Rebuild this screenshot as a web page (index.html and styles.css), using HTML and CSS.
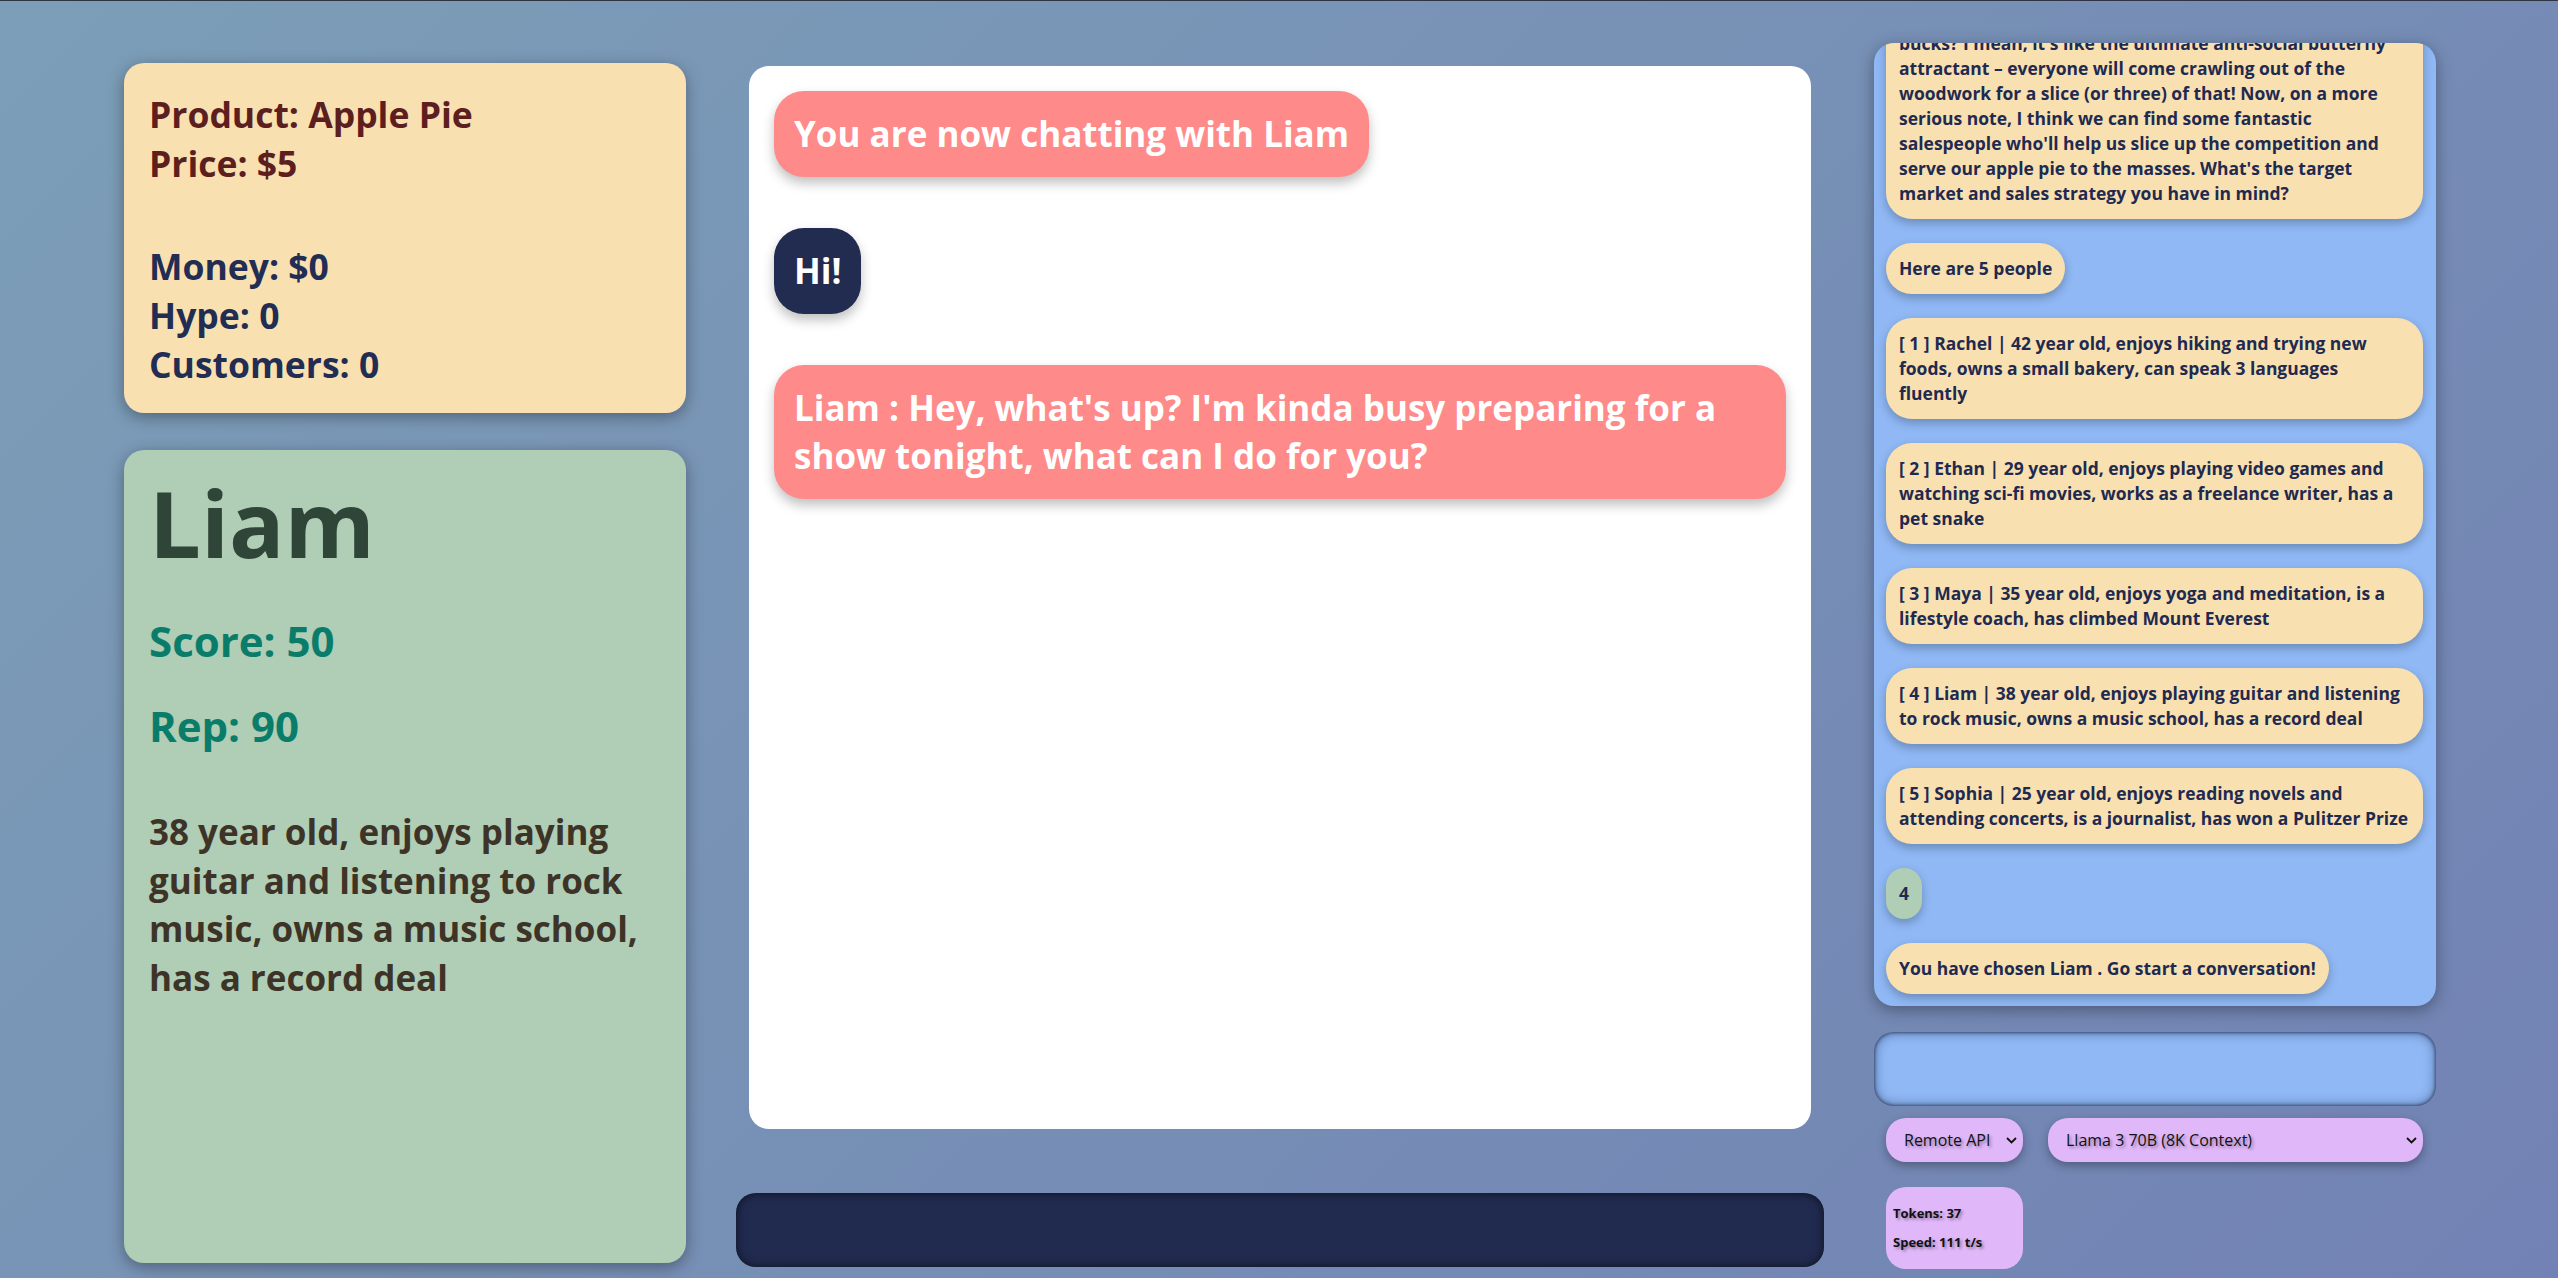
FILE: index.html
```html
<!DOCTYPE html>
<html lang="en">
<head>
<meta charset="utf-8">
<title>Apple Pie Sales Game</title>
<link rel="stylesheet" href="styles.css">
</head>
<body>
<div class="app">
  <aside class="left">
    <section class="card product">
      <div class="prod">Product: Apple Pie<br>Price: $5</div>
      <div class="money">Money: $0<br>Hype: 0<br>Customers: 0</div>
    </section>
    <section class="card person">
      <h1>Liam</h1>
      <h2 class="score">Score: 50</h2>
      <h2 class="rep">Rep: 90</h2>
      <p>38 year old, enjoys playing guitar and listening to rock music, owns a music school, has a record deal</p>
    </section>
  </aside>

  <main class="center">
    <div class="chat">
      <div class="msg sys">You are now chatting with Liam</div>
      <div class="msg user">Hi!</div>
      <div class="msg sys">Liam : Hey, what's up? I'm kinda busy preparing for a show tonight, what can I do for you?</div>
    </div>
    <div class="chat-input"></div>
  </main>

  <aside class="right">
    <div class="log">
      <div class="bubble wide">Ooh, apple pie, huh? I love it! Who can resist a warm, flaky<br>slice of homemade apple pie for just five<br>bucks? I mean, it's like the ultimate anti-social butterfly<br>attractant – everyone will come crawling out of the<br>woodwork for a slice (or three) of that! Now, on a more<br>serious note, I think we can find some fantastic<br>salespeople who'll help us slice up the competition and<br>serve our apple pie to the masses. What's the target<br>market and sales strategy you have in mind?</div>
      <div class="bubble">Here are 5 people</div>
      <div class="bubble">[ 1 ] Rachel | 42 year old, enjoys hiking and trying new foods, owns a small bakery, can speak 3 languages fluently</div>
      <div class="bubble">[ 2 ] Ethan | 29 year old, enjoys playing video games and watching sci-fi movies, works as a freelance writer, has a pet snake</div>
      <div class="bubble">[ 3 ] Maya | 35 year old, enjoys yoga and meditation, is a lifestyle coach, has climbed Mount Everest</div>
      <div class="bubble">[ 4 ] Liam | 38 year old, enjoys playing guitar and listening to rock music, owns a music school, has a record deal</div>
      <div class="bubble">[ 5 ] Sophia | 25 year old, enjoys reading novels and attending concerts, is a journalist, has won a Pulitzer Prize</div>
      <div class="bubble pick">4</div>
      <div class="bubble">You have chosen Liam . Go start a conversation!</div>
    </div>
    <div class="log-input"></div>
    <div class="selects">
      <div class="sel sel-api">
        <select><option>Remote API</option></select>
        <svg class="chev" width="11" height="7" viewBox="0 0 11 7"><polyline points="1,1 5.5,5.5 10,1" fill="none" stroke="#111" stroke-width="1.8"/></svg>
      </div>
      <div class="sel sel-model">
        <select><option>Llama 3 70B (8K Context)</option></select>
        <svg class="chev" width="11" height="7" viewBox="0 0 11 7"><polyline points="1,1 5.5,5.5 10,1" fill="none" stroke="#111" stroke-width="1.8"/></svg>
      </div>
    </div>
    <div class="perf">
      <div>Tokens: 37</div>
      <div>Speed: 111 t/s</div>
    </div>
  </aside>
</div>
</body>
</html>
```

FILE: styles.css
```css
html, body {
  margin: 0;
  height: 100%;
}

body {
  background: linear-gradient(135deg, #7c9eb7 0%, #7282b4 100%);
  font-family: "Open Sans", "Noto Sans", sans-serif;
  font-weight: 700;
  overflow: hidden;
  box-shadow: inset 0 1px 0 #2e3440;
}

.app {
  display: flex;
  align-items: flex-start;
  gap: 50px;
  padding: 43px 0 0 124px;
}

/* left column */
.left {
  width: 562px;
  margin-top: 20px;
  display: flex;
  flex-direction: column;
  gap: 37px;
}

.card {
  box-sizing: border-box;
  border-radius: 20px;
  box-shadow: 0 4px 16px rgba(0, 0, 0, 0.35);
  padding: 0 25px;
}

.product {
  background: #f9e0b0;
  height: 350px;
  padding-top: 27px;
  font-size: 35.5px;
  line-height: 49px;
}

.prod { color: #5c1e1e; }

.money {
  color: #222d53;
  margin-top: 54px;
}

.person {
  background: #b0cdb6;
  height: 813px;
  padding-top: 25px;
}

.person h1 {
  margin: 0;
  font-size: 92px;
  line-height: 96px;
  color: #2f4538;
}

.person h2 {
  margin: 0;
  font-size: 42px;
  line-height: 55px;
  color: #0a7d6a;
}

.person .score { margin-top: 42px; }
.person .rep { margin-top: 30px; }

.person p {
  margin: 55px 0 0;
  font-size: 35px;
  line-height: 48.7px;
  color: #3d3427;
}

/* center column */
.center {
  width: 1088px;
  margin-top: 23px;
  display: flex;
  flex-direction: column;
  align-items: center;
  gap: 64px;
}

.chat {
  box-sizing: border-box;
  width: 1062px;
  height: 1063px;
  background: #ffffff;
  border-radius: 20px;
  padding: 25px;
  display: flex;
  flex-direction: column;
  align-items: flex-start;
  gap: 51px;
}

.msg {
  font-size: 35px;
  line-height: 48px;
  padding: 19px 20px;
  border-radius: 30px;
  color: #ffffff;
  box-shadow: 0 6px 12px rgba(0, 0, 0, 0.25);
}

.msg.sys { background: #ff8a8a; }
.msg.user { background: #222b50; }

.chat-input {
  width: 1088px;
  height: 74px;
  background: #212b50;
  border-radius: 20px;
  box-shadow: inset 0 0 10px rgba(0, 0, 0, 0.65);
}

/* right column */
.right {
  width: 562px;
  display: flex;
  flex-direction: column;
}

.log {
  box-sizing: border-box;
  height: 963px;
  background: #8fb8f5;
  border-radius: 20px;
  box-shadow: 0 4px 16px rgba(0, 0, 0, 0.35);
  overflow: hidden;
  display: flex;
  flex-direction: column;
  justify-content: flex-end;
  align-items: flex-start;
  gap: 24px;
  padding: 0 13px 12px 12px;
}

.bubble {
  flex-shrink: 0;
  background: #f9e0b0;
  color: #1f2a50;
  font-size: 17.48px;
  line-height: 25px;
  padding: 13px;
  border-radius: 26px;
  box-shadow: 0 4px 10px rgba(0, 0, 0, 0.25);
}

.bubble.wide { align-self: stretch; }
.bubble.pick { background: #b0cdb6; }

.log-input {
  margin-top: 26px;
  height: 74px;
  background: #8fb8f5;
  border-radius: 20px;
  box-shadow: inset 0 0 3px 1px rgba(30, 40, 70, 0.6), inset 0 0 12px rgba(20, 30, 60, 0.55);
}

.selects {
  display: flex;
  gap: 25px;
  margin: 12px 12px 0;
}

.sel {
  position: relative;
  height: 44px;
  border-radius: 20px;
  background: #e0b8fa;
  box-shadow: 0 4px 10px rgba(0, 0, 0, 0.3);
}

.sel-api { width: 137px; }
.sel-model { width: 375px; }

.sel select {
  appearance: none;
  -webkit-appearance: none;
  box-sizing: border-box;
  width: 100%;
  height: 100%;
  border: 0;
  background: transparent;
  padding: 0 28px 0 18px;
  font-family: "Open Sans", "Noto Sans", sans-serif;
  font-weight: 400;
  font-size: 16px;
  color: #111;
  text-shadow: 2px 2px 3px rgba(0, 0, 0, 0.35);
  outline: none;
}

.chev {
  position: absolute;
  right: 6px;
  top: 19px;
}

.perf {
  box-sizing: border-box;
  width: 137px;
  height: 82px;
  margin: 25px 0 0 12px;
  padding: 12px 7px;
  background: #e0b8fa;
  border-radius: 20px;
  font-size: 13px;
  line-height: 29px;
  color: #111;
  text-shadow: 2px 2px 3px rgba(0, 0, 0, 0.35);
}
```
